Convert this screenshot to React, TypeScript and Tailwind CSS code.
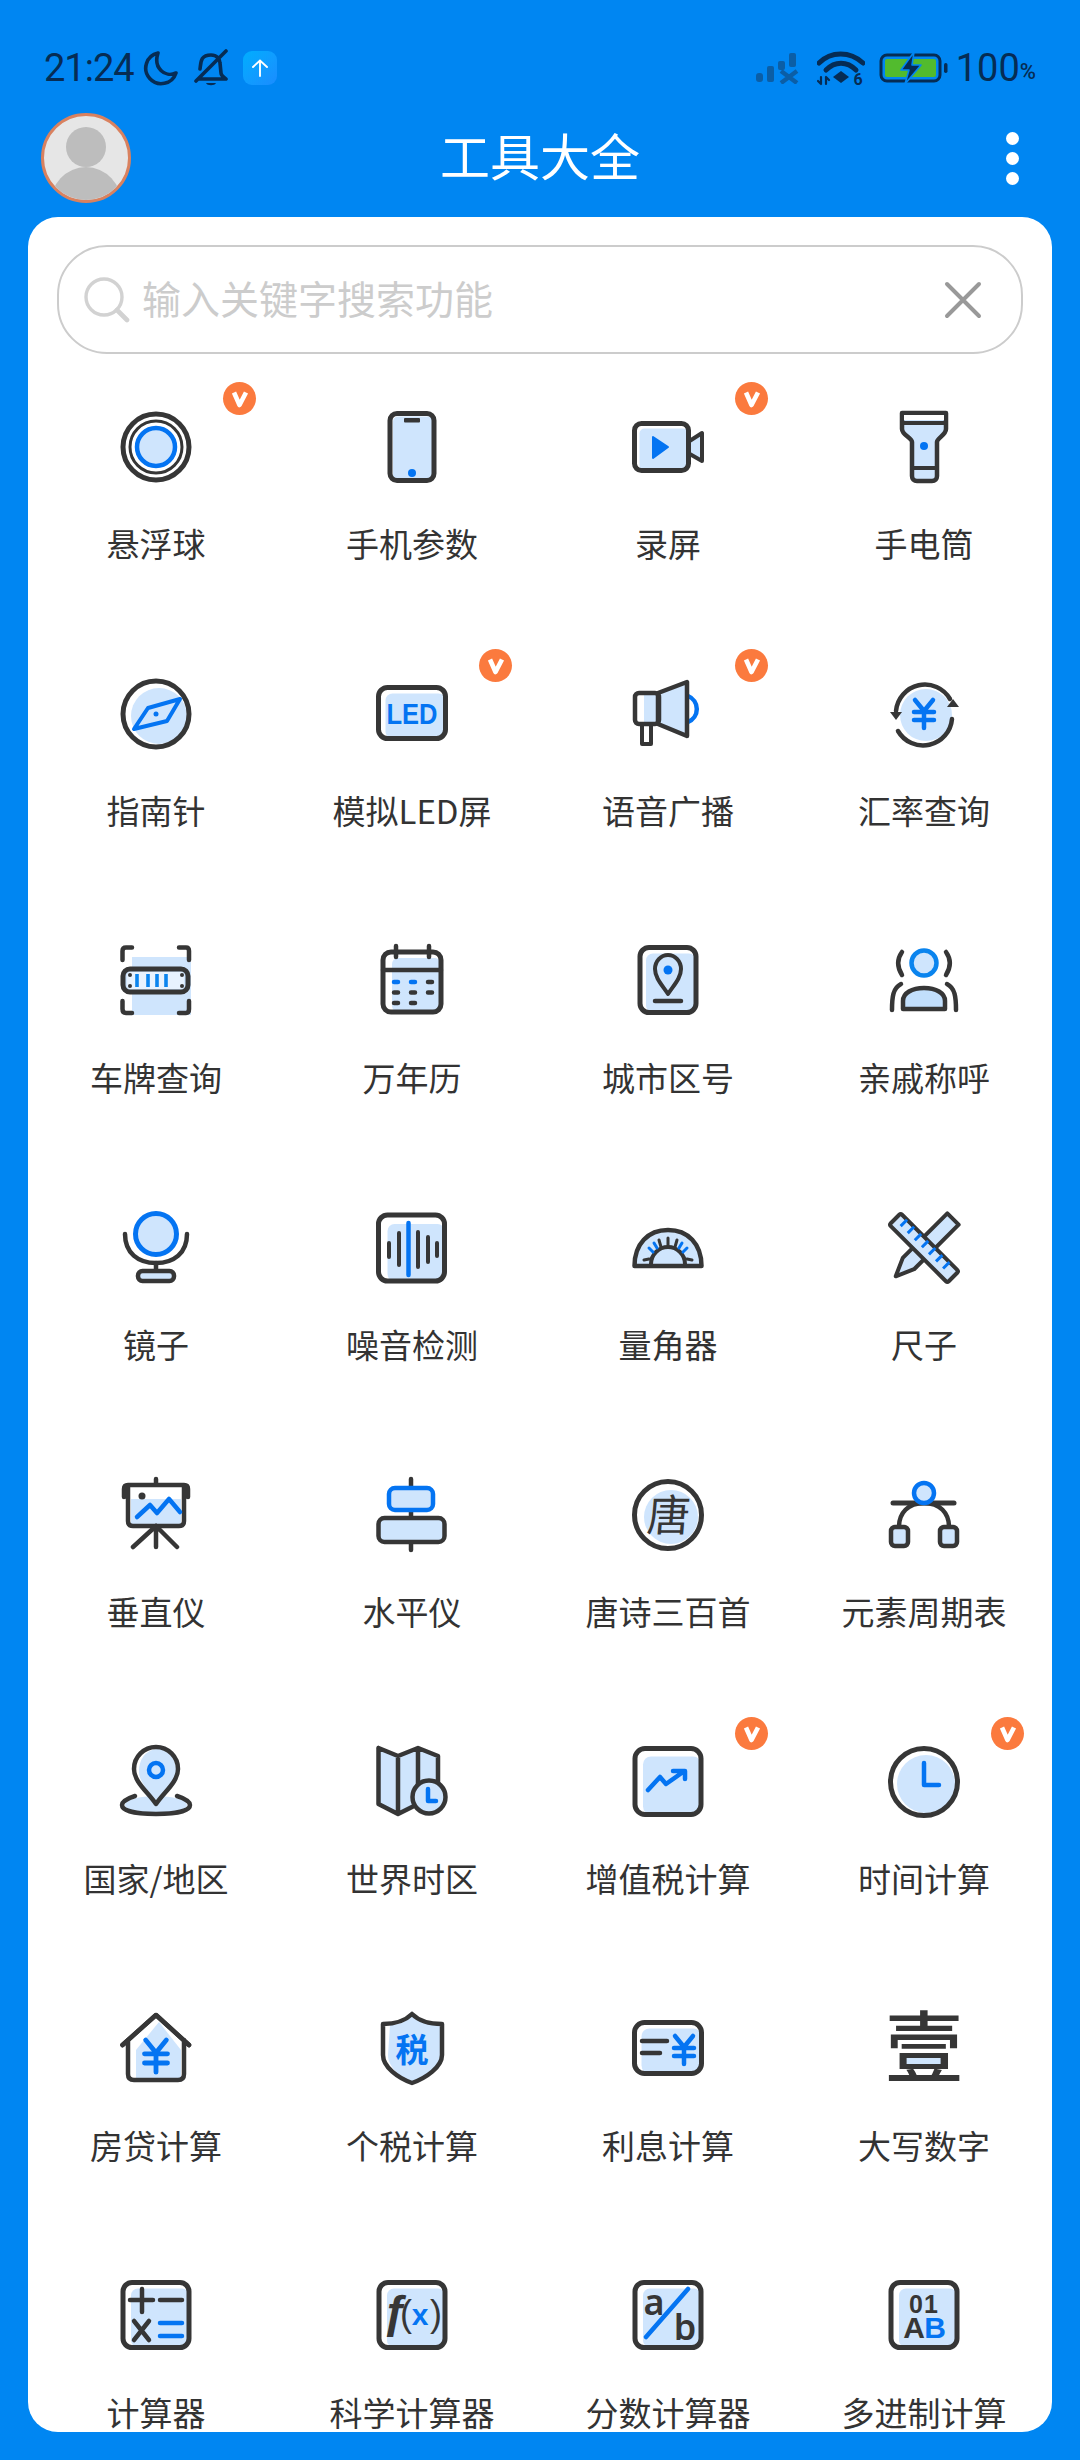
import React from "react";

const D = "#363636";
const B = "#0474f2";
const L = "#cfe5fd";
const CJK = '"Noto Sans CJK SC", "Noto Sans", sans-serif';
const LAT = '"Liberation Sans", Arial, sans-serif';

function Box({ x, y, w, h, r, sw = 5, fx = 5, fy = 5 }: { x: number; y: number; w: number; h: number; r: number; sw?: number; fx?: number; fy?: number }) {
  return (
    <>
      <rect x={x + fx} y={y + fy} width={w - fx} height={h - fy} rx={r - 2} fill={L} />
      <rect x={x} y={y} width={w} height={h} rx={r} stroke={D} strokeWidth={sw} fill="none" />
    </>
  );
}

function Yen({ cx, top, s = 1, sw = 4.5 }: { cx: number; top: number; s?: number; sw?: number }) {
  return (
    <g stroke={B} strokeWidth={sw} fill="none">
      <path d={`M${cx - 9 * s} ${top} L${cx} ${top + 11 * s} L${cx + 9 * s} ${top} M${cx} ${top + 11 * s} V${top + 28 * s} M${cx - 10 * s} ${top + 12 * s} H${cx + 10 * s} M${cx - 10 * s} ${top + 20 * s} H${cx + 10 * s}`} />
    </g>
  );
}

const icons: Record<string, React.ReactNode> = {
  ball: (
    <>
      <circle cx="36" cy="36" r="33" stroke={D} strokeWidth="5" />
      <circle cx="36" cy="36" r="26" stroke={D} strokeWidth="3" />
      <circle cx="36" cy="36" r="19" fill={L} stroke={B} strokeWidth="4.5" />
    </>
  ),
  phone: (
    <>
      <Box x={14} y={2.5} w={44} h={67} r={7} fx={3} fy={3} />
      <rect x="28" y="7" width="16" height="4.5" rx="1" fill={D} />
      <circle cx="36" cy="62" r="4" fill={B} />
    </>
  ),
  video: (
    <>
      <path d="M56 31 L70 22 V50 L56 42 Z" fill={L} stroke={D} strokeWidth="4" />
      <Box x={2.5} y={12.5} w={54} h={47} r={7} />
      <path d="M21 26 L36 36 L21 47 Z" fill={B} stroke={B} strokeWidth="2" />
    </>
  ),
  torch: (
    <>
      <path d="M14 2 H58 V18 C58 24 49 27 49 31 V65 C49 68 47 70 44 70 H29 C26 70 24 68 24 65 V31 C24 27 14 24 14 18 Z" fill={L} />
      <path d="M14 2 H58 V18 C58 24 49 27 49 31 V65 C49 68 47 70 44 70 H29 C26 70 24 68 24 65 V31 C24 27 14 24 14 18 Z" stroke={D} strokeWidth="4.5" />
      <rect x="16" y="4" width="40" height="5" fill="#fff" />
      <path d="M14 12 H58 M24 57 H49" stroke={D} strokeWidth="4" />
      <circle cx="36" cy="35" r="4" fill={B} />
    </>
  ),
  compass: (
    <>
      <circle cx="39" cy="38" r="28" fill={L} />
      <circle cx="36" cy="36" r="33" stroke={D} strokeWidth="5" />
      <path d="M60 21 L28 30 L14 51 L47 43 Z" stroke={B} strokeWidth="4" />
      <circle cx="36" cy="36" r="2.5" fill={B} />
    </>
  ),
  led: (
    <>
      <Box x={2.5} y={9.5} w={67} h={51} r={9} fx={7} fy={6} />
      <text x="36" y="46" textAnchor="middle" fontFamily={LAT} fontWeight="700" fontSize="29" fill={B} textLength="51" lengthAdjust="spacingAndGlyphs">LED</text>
    </>
  ),
  horn: (
    <>
      <path d="M56 18 A14 14 0 0 1 56 44" stroke={B} strokeWidth="4.5" />
      <path d="M10 46 H19 V66 H10 Z" stroke={D} strokeWidth="4" fill="#fff" />
      <rect x="12" y="17" width="14" height="28" fill={L} />
      <path d="M26 15 L55 4 V58 L26 46 Z" fill={L} stroke={D} strokeWidth="4.5" />
      <rect x="3" y="15" width="24" height="31" rx="4" stroke={D} strokeWidth="4.5" />
    </>
  ),
  exchange: (
    <>
      <circle cx="38" cy="37" r="26" fill={L} />
      <path d="M8 33 A29 29 0 0 1 62 21 M64 41 A29 29 0 0 1 10 53" stroke={D} strokeWidth="4.5" />
      <path d="M2 34 H14 L8 42 Z M59 29 H71 L65 21 Z" fill={D} />
      <Yen cx={36} top={22} />
    </>
  ),
  plate: (
    <>
      <rect x="12" y="12" width="59" height="58" fill={L} />
      <path d="M12 2.5 H6 Q2.5 2.5 2.5 6 V15 M59 2.5 H66 Q69 2.5 69 6 V15 M2.5 56 V64 Q2.5 68 6 68 H12 M69 56 V64 Q69 68 66 68 H59" stroke={D} strokeWidth="4.5" />
      <rect x="3" y="24" width="65" height="23" rx="7" fill={L} stroke={D} strokeWidth="5" />
      <rect x="7" y="27" width="57" height="17" rx="4" fill="#fff" opacity="0.5" />
      <path d="M17 29 V42 M28 29 V42 M37 29 V42 M46 29 V42" stroke="#0a84ee" strokeWidth="3.6" strokeLinecap="butt" />
      <g fill={D}>
        <circle cx="10" cy="30" r="2" /><circle cx="10" cy="41" r="2" /><circle cx="62" cy="30" r="2" /><circle cx="62" cy="41" r="2" />
      </g>
    </>
  ),
  calendar: (
    <>
      <Box x={7} y={7} w={58} h={60} r={8} fx={9} fy={6} />
      <path d="M7 25 H65 M20 1 V12 M53 1 V12" stroke={D} strokeWidth="4.5" />
      <g strokeWidth="4.5">
        <path d="M18 37 H22 M35 37 H39" stroke={B} />
        <path d="M52 37 H56 M18 47.5 H22 M35 47.5 H39 M52 47.5 H56 M18 58 H22 M35 58 H39" stroke={D} />
      </g>
    </>
  ),
  citycode: (
    <>
      <Box x={8} y={2.5} w={56} h={65} r={9} fx={6} fy={6} />
      <path d="M36 49 C30 40 23 33 23 24 A13 14 0 0 1 49 24 C49 33 42 40 36 49 Z" fill={L} stroke={D} strokeWidth="4" />
      <circle cx="36" cy="25" r="4.5" fill={B} />
      <path d="M23 56 H49" stroke={D} strokeWidth="4.5" />
    </>
  ),
  relatives: (
    <>
      <circle cx="36" cy="18" r="12.5" fill={L} stroke="#0a84ee" strokeWidth="4.5" />
      <path d="M14 7 C9 14 9 22 14 30 M58 7 C63 14 63 22 58 30" stroke={D} strokeWidth="4.5" />
      <path d="M13 39 C5 43 4 52 4 65 M59 39 C67 43 68 52 68 65" stroke={D} strokeWidth="4.5" />
      <path d="M15 64 V56 C15 48 24 43 36 43 C48 43 57 48 57 56 V64 Z" fill="#c2dffc" stroke={D} strokeWidth="4.5" />
    </>
  ),
  mirror: (
    <>
      <path d="M5 22 C5 41 18 51 36 51 C54 51 67 41 67 22" stroke={D} strokeWidth="4.5" />
      <circle cx="36" cy="22" r="20.5" fill={L} stroke={B} strokeWidth="5" />
      <path d="M36 51 V59" stroke={D} strokeWidth="4.5" />
      <rect x="18" y="59" width="36" height="10" rx="4.5" fill={L} stroke={D} strokeWidth="4.5" />
    </>
  ),
  noise: (
    <>
      <Box x={2.5} y={3} w={66} h={66} r={9} fx={9} fy={9} />
      <path d="M13 31 V45 M23 21 V53 M42 20 V55 M52 25 V50 M61 31 V44" stroke={D} strokeWidth="4" />
      <path d="M32.5 11 V63" stroke={B} strokeWidth="4.5" />
    </>
  ),
  protractor: (
    <>
      <path d="M2.5 54 C2.5 32 16 18 36 18 C56 18 69.5 32 69.5 54 Z" fill={L} />
      <path d="M2.5 54 C2.5 32 16 18 36 18 C56 18 69.5 32 69.5 54 Z" stroke={D} strokeWidth="4.5" />
      <path d="M19 52 A17 17 0 0 1 53 52" stroke={D} strokeWidth="4" />
      <path d="M12 48 L17 47 M60 48 L55 47 M36 26 V33 M27 28 L29 35 M45 28 L43 35" stroke={D} strokeWidth="3" />
      <path d="M17 36 L21 40 M22 31 L25 36 M55 36 L51 40 M50 31 L47 36" stroke={B} strokeWidth="3" />
    </>
  ),
  ruler: (
    <>
      <g transform="rotate(45 36 36)">
        <path d="M28 -5 H44 V58 L36 76 L28 58 Z" fill={L} stroke={D} strokeWidth="4" />
      </g>
      <g transform="rotate(-45 36 36)">
        <rect x="28" y="-5" width="16" height="82" rx="2" fill={L} stroke={D} strokeWidth="4" />
        <path d="M35 4 H44 M35 14 H44 M35 24 H44 M35 34 H44 M35 44 H44 M35 54 H44 M35 64 H44" stroke={B} strokeWidth="3" strokeLinecap="butt" />
      </g>
    </>
  ),
  easel: (
    <>
      <rect x="11" y="20" width="50" height="26" fill={L} />
      <path d="M36 0 V6 M4 18 V10 Q4 6 8 6 H64 Q68 6 68 10 V18 M8 8 V42 Q8 47 13 47 H59 Q64 47 64 42 V8" stroke={D} strokeWidth="4.5" />
      <path d="M36 47 V68 M36 47 L13 68 M36 47 L57 68" stroke={D} strokeWidth="4.5" />
      <path d="M17 38 L30 26 L37 34 L49 20 L60 33" stroke={B} strokeWidth="4.5" />
      <circle cx="22" cy="17" r="3.5" fill={D} />
    </>
  ),
  level: (
    <>
      <path d="M35 0 V9 M35 31 V39 M35 63 V71" stroke={D} strokeWidth="4.5" />
      <rect x="13" y="9" width="44" height="22" rx="6" fill={L} stroke={B} strokeWidth="4.5" />
      <rect x="2.5" y="39" width="66" height="24" rx="6" fill={L} stroke={D} strokeWidth="4.5" />
    </>
  ),
  tang: (
    <>
      <circle cx="39" cy="38" r="27" fill={L} />
      <circle cx="36" cy="36" r="33.5" stroke={D} strokeWidth="5" />
      <text x="36" y="52" textAnchor="middle" fontFamily={CJK} fontSize="43" fill={D} transform="skewX(-5) translate(4 0)">唐</text>
    </>
  ),
  bezier: (
    <>
      <path d="M11 48 C11 34 20 24 36 24 C52 24 61 34 61 48" stroke={D} strokeWidth="4.5" />
      <path d="M5 24 H66" stroke={D} strokeWidth="5" />
      <circle cx="36" cy="14" r="10" fill={L} stroke={B} strokeWidth="4.5" />
      <rect x="3" y="48" width="17" height="19" rx="4" fill={L} stroke={D} strokeWidth="4.5" />
      <rect x="52" y="48" width="17" height="19" rx="4" fill={L} stroke={D} strokeWidth="4.5" />
    </>
  ),
  pin: (
    <>
      <ellipse cx="36" cy="59" rx="31" ry="9" fill={L} />
      <path d="M15 50 C6 53 2 56 2 59 C2 65 17 68 36 68 C55 68 70 65 70 59 C70 56 66 53 57 50" stroke={D} strokeWidth="4.5" />
      <path d="M36 58 C28 46 14 36 14 23 A22 22 0 0 1 58 23 C58 36 44 46 36 58 Z" fill="#fff" />
      <path d="M36 58 C30 46 19 36 19 26 A18 21 0 0 1 56 23 C58 36 44 46 36 58 Z" fill={L} />
      <path d="M36 58 C28 46 14 36 14 23 A22 22 0 0 1 58 23 C58 36 44 46 36 58 Z" stroke={D} strokeWidth="4.5" />
      <circle cx="36" cy="24" r="7" stroke={B} strokeWidth="4.5" />
    </>
  ),
  worldtime: (
    <>
      <path d="M2.5 2 L22 10 L42 2 L62 10 V50 L22 68 L2.5 58 Z" fill={L} />
      <path d="M2.5 2 L22 10 L42 2 L62 10 V40 M42 2 V48 M22 10 V68 M2.5 2 V58 L22 68 L38 60" stroke={D} strokeWidth="4.5" />
      <circle cx="53" cy="51" r="16.5" fill={L} stroke={D} strokeWidth="4.5" />
      <path d="M52 43 V55 H60" stroke={B} strokeWidth="4.5" />
    </>
  ),
  chart: (
    <>
      <Box x={3} y={2.5} w={66} h={66} r={10} fx={8} fy={8} />
      <path d="M16 44 L28 31 L34 38 L51 26 M41 25 H53 V33" stroke={B} strokeWidth="4.5" />
    </>
  ),
  clock: (
    <>
      <circle cx="38" cy="38" r="29" fill={L} />
      <circle cx="36" cy="36" r="33.5" stroke={D} strokeWidth="5" />
      <path d="M36 17 V39 H51" stroke={B} strokeWidth="4.5" />
    </>
  ),
  house: (
    <>
      <path d="M36 6 L58 34 V66 H13 V34 Z" fill={L} transform="translate(3 3)" />
      <path d="M2.5 32 L36 2 L69 32 M8 27 V61 Q8 67 14 67 H58 Q64 67 64 61 V27" stroke={D} strokeWidth="4.5" />
      <path d="M2.5 32 L36 2 L69 32" stroke={D} strokeWidth="4.5" />
      <Yen cx={36} top={27} s={1.15} sw={4.8} />
    </>
  ),
  shield: (
    <>
      <path d="M14 12 C24 12 30 8 36 3 C42 8 50 12 64 12 V42 C64 54 50 64 36 70 C24 64 12 54 12 42 Z" fill={L} />
      <path d="M7 11 C20 11 29 8 36 1 C43 8 52 11 66 11 V42 C66 54 50 65 36 70 C22 65 7 54 7 42 Z" stroke={D} strokeWidth="4.5" />
      <text x="36" y="49" textAnchor="middle" fontFamily={CJK} fontWeight="700" fontSize="33" fill={B}>税</text>
    </>
  ),
  interest: (
    <>
      <Box x={2.5} y={9.5} w={67} h={51} r={10} fx={7} fy={6} />
      <path d="M10 28 H35 M10 40 H28" stroke={D} strokeWidth="4.5" />
      <Yen cx={52} top={23} />
    </>
  ),
  yi: (
    <>
      <rect x="16" y="44" width="40" height="11" fill={L} />
      <text x="36" y="64" textAnchor="middle" fontFamily={CJK} fontWeight="500" fontSize="78" fill={D}>壹</text>
    </>
  ),
  calc: (
    <>
      <Box x={3} y={2.5} w={66} h={65} r={9} fx={8} fy={6} />
      <path d="M10 20 H33 M22 9 V32 M40 20 H62" stroke={D} strokeWidth="4.5" />
      <path d="M14 41 L29 60 M29 41 L14 60" stroke={D} strokeWidth="4.5" />
      <path d="M40 43 H62 M40 56 H62" stroke={B} strokeWidth="4.5" />
    </>
  ),
  fx: (
    <>
      <Box x={3} y={2.5} w={66} h={65} r={9} fx={8} fy={6} />
      <text x="7" y="47" fontFamily={LAT} fontSize="46" fontWeight="700" fill={D}>ƒ</text>
      <text x="24" y="46" fontFamily={LAT} fontSize="36" fill={D}>(</text>
      <text x="44" y="45" textAnchor="middle" fontFamily={LAT} fontWeight="700" fontSize="30" fill={B}>x</text>
      <text x="54" y="46" fontFamily={LAT} fontSize="36" fill={D}>)</text>
    </>
  ),
  frac: (
    <>
      <Box x={3} y={2.5} w={66} h={65} r={9} fx={8} fy={6} />
      <text x="22" y="35" textAnchor="middle" fontFamily='"Noto Sans", sans-serif' fontSize="36" fontWeight="600" fill={D}>a</text>
      <text x="53" y="60" textAnchor="middle" fontFamily='"Noto Sans", sans-serif' fontSize="36" fontWeight="600" fill={D}>b</text>
      <path d="M56 9 L14 57" stroke={B} strokeWidth="4.5" />
    </>
  ),
  base: (
    <>
      <Box x={3} y={2.5} w={66} h={65} r={9} fx={8} fy={6} />
      <text x="36" y="33" textAnchor="middle" fontFamily={LAT} fontSize="25" fontWeight="700" fill={D} letterSpacing="1">01</text>
      <text x="26" y="58" textAnchor="middle" fontFamily={LAT} fontSize="30" fontWeight="700" fill={D}>A</text>
      <text x="47" y="58" textAnchor="middle" fontFamily={LAT} fontSize="30" fontWeight="700" fill={B}>B</text>
    </>
  ),
};

const items: [string, string, boolean][] = [
  ["悬浮球", "ball", true], ["手机参数", "phone", false], ["录屏", "video", true], ["手电筒", "torch", false],
  ["指南针", "compass", false], ["模拟LED屏", "led", true], ["语音广播", "horn", true], ["汇率查询", "exchange", false],
  ["车牌查询", "plate", false], ["万年历", "calendar", false], ["城市区号", "citycode", false], ["亲戚称呼", "relatives", false],
  ["镜子", "mirror", false], ["噪音检测", "noise", false], ["量角器", "protractor", false], ["尺子", "ruler", false],
  ["垂直仪", "easel", false], ["水平仪", "level", false], ["唐诗三百首", "tang", false], ["元素周期表", "bezier", false],
  ["国家/地区", "pin", false], ["世界时区", "worldtime", false], ["增值税计算", "chart", true], ["时间计算", "clock", true],
  ["房贷计算", "house", false], ["个税计算", "shield", false], ["利息计算", "interest", false], ["大写数字", "yi", false],
  ["计算器", "calc", false], ["科学计算器", "fx", false], ["分数计算器", "frac", false], ["多进制计算", "base", false],
];

function Tool({ label, icon, vip }: { label: string; icon: string; vip: boolean }) {
  return (
    <div className="relative flex h-[267px] flex-col items-center pt-[33px]">
      <svg width="72" height="72" viewBox="0 0 72 72" fill="none" strokeLinecap="round" strokeLinejoin="round" className="overflow-visible">
        {icons[icon]}
      </svg>
      <div className="mt-[38px] h-[44px] text-center text-[33px] leading-[44px] whitespace-nowrap text-[#333333]">{label}</div>
      {vip && (
        <div className="absolute top-[4px] left-[195px] flex h-[33px] w-[33px] items-center justify-center rounded-full bg-[#fb7a3e]">
          <svg width="20" height="18" viewBox="0 0 20 18" fill="none">
            <path d="M4 2.5 L9.5 15 L16 2.5" stroke="#fff" strokeWidth="4.6" strokeLinejoin="round" />
          </svg>
        </div>
      )}
    </div>
  );
}

const NAVY = "#062c54";

export default function App() {
  return (
    <div className="flex h-[2460px] w-[1080px] flex-col overflow-hidden bg-[#0086f2] font-['Noto_Sans_CJK_SC',sans-serif]">
      {/* status bar */}
      <div className="flex h-[105px] items-start justify-between pt-[49px] pr-[44px] pl-[44px] font-['Roboto',sans-serif] text-[#062c54]">
        <div className="flex h-[38px] items-center">
          <span className="w-[92px] text-[38px] leading-[38px] tracking-[-1px]">21:24</span>
          <svg width="36" height="36" viewBox="0 0 36 36" fill="none" className="ml-[7px]">
            <path d="M15 3 A15.5 15.5 0 1 0 33 23 C22 28 10 18 15 3 Z" stroke={NAVY} strokeWidth="3.6" strokeLinejoin="round" />
          </svg>
          <svg width="36" height="38" viewBox="0 0 36 38" fill="none" className="ml-[14px]">
            <path d="M7 20 C8 14 7 6 18 6 C24 6 27 10 27 14 L28 24 C28 27 31 28 33 30 H6 M33 2 L3 32" stroke={NAVY} strokeWidth="3.6" strokeLinecap="round" strokeLinejoin="round" />
            <path d="M13 34 H23 C22 37 14 37 13 34 Z" fill={NAVY} />
          </svg>
          <div className="ml-[14px] flex h-[34px] w-[34px] items-center justify-center rounded-[9px] bg-gradient-to-br from-[#00aeff] to-[#1a8cff]">
            <svg width="20" height="20" viewBox="0 0 20 20" fill="none">
              <path d="M10 18 V3 M3 9 L10 2.5 L17 9" stroke="#fff" strokeWidth="1.9" strokeLinecap="round" />
            </svg>
          </div>
        </div>
        <div className="flex h-[38px] items-center">
          <svg width="48" height="32" viewBox="0 0 48 32" fill="#0b5ea6">
            <rect x="0" y="21" width="7" height="9" rx="3" />
            <rect x="11" y="14" width="7" height="16" rx="2" />
            <rect x="22" y="9" width="7" height="9" rx="2" />
            <rect x="33" y="1" width="7" height="14" rx="2" />
            <path d="M25 19 L41 31 M41 19 L25 31" stroke="#0b5ea6" strokeWidth="4.4" />
          </svg>
          <svg width="48" height="36" viewBox="0 0 48 36" fill="none" className="ml-[13px]">
            <path d="M2 13 C14 1 33 1 46 13" stroke={NAVY} strokeWidth="5" strokeLinecap="round" />
            <path d="M9 20 C18 11 30 11 39 20" stroke={NAVY} strokeWidth="5" strokeLinecap="round" />
            <path d="M16 27 L24 21 L32 27 L24 33 Z" fill={NAVY} />
            <path d="M4 27 V34 M1 31 L4 34 M9 34 V27 M9 27 L12 30" stroke={NAVY} strokeWidth="2.2" strokeLinecap="round" />
            <text x="41" y="35" fontFamily="Roboto, sans-serif" fontWeight="700" fontSize="16" fill={NAVY} textAnchor="middle">6</text>
          </svg>
          <svg width="70" height="32" viewBox="0 0 70 32" fill="none" className="ml-[14px]">
            <rect x="2" y="3" width="59" height="26" rx="6" stroke={NAVY} strokeWidth="3" />
            <rect x="6" y="7" width="51" height="18" rx="2" fill="#52bb2e" />
            <rect x="65" y="11" width="3.5" height="10" rx="1.7" fill={NAVY} />
            <path d="M35 0 L22 18 H30 L26 32 L42 13 H33 Z" fill={NAVY} stroke="#0086f2" strokeWidth="1.6" strokeLinejoin="round" />
          </svg>
          <span className="ml-[7px] text-[38px] leading-[38px]">100</span>
          <span className="mt-[8px] text-[22px] leading-[22px] font-medium">%</span>
        </div>
      </div>

      {/* header */}
      <div className="grid h-[112px] grid-cols-[1fr_auto_1fr] items-start px-[41px]">
        <div className="mt-[8px] h-[90px] w-[90px] overflow-hidden rounded-full border-[3px] border-[#d9815f] bg-[#e6e6e6]">
          <svg width="84" height="84" viewBox="0 0 84 84">
            <circle cx="42" cy="31" r="20" fill="#bdbdbd" />
            <ellipse cx="42" cy="89" rx="36" ry="38" fill="#bdbdbd" />
          </svg>
        </div>
        <h1 className="mt-[17px] text-center text-[50px] leading-[64px] font-normal text-white">工具大全</h1>
        <div className="mt-[27px] mr-[20px] flex flex-col gap-[7px] justify-self-end">
          <span className="h-[13px] w-[13px] rounded-full bg-white" />
          <span className="h-[13px] w-[13px] rounded-full bg-white" />
          <span className="h-[13px] w-[13px] rounded-full bg-white" />
        </div>
      </div>

      {/* card */}
      <div className="mx-[28px] mb-[28px] flex min-h-0 flex-1 flex-col overflow-hidden rounded-[30px] bg-white">
        <div className="mx-[29px] mt-[28px] flex h-[109px] shrink-0 items-center rounded-[50px] border-2 border-[#cccccc] pr-[39px] pl-[25px]">
          <svg width="46" height="46" viewBox="0 0 46 46" fill="none">
            <circle cx="20" cy="20" r="18" stroke="#d2d2d2" strokeWidth="3.4" />
            <path d="M33 33 L43 43" stroke="#d2d2d2" strokeWidth="4.6" strokeLinecap="round" />
          </svg>
          <span className="mb-[6px] ml-[12px] flex-1 text-[39px] leading-[52px] text-[#cccccc]">输入关键字搜索功能</span>
          <svg width="38" height="38" viewBox="0 0 38 38" fill="none">
            <path d="M3 3 L35 35 M35 3 L3 35" stroke="#999999" strokeWidth="4" strokeLinecap="round" />
          </svg>
        </div>
        <div className="mt-[24px] grid grid-cols-4">
          {items.map((it) => (
            <Tool key={it[0]} label={it[0]} icon={it[1]} vip={it[2]} />
          ))}
        </div>
      </div>
    </div>
  );
}
